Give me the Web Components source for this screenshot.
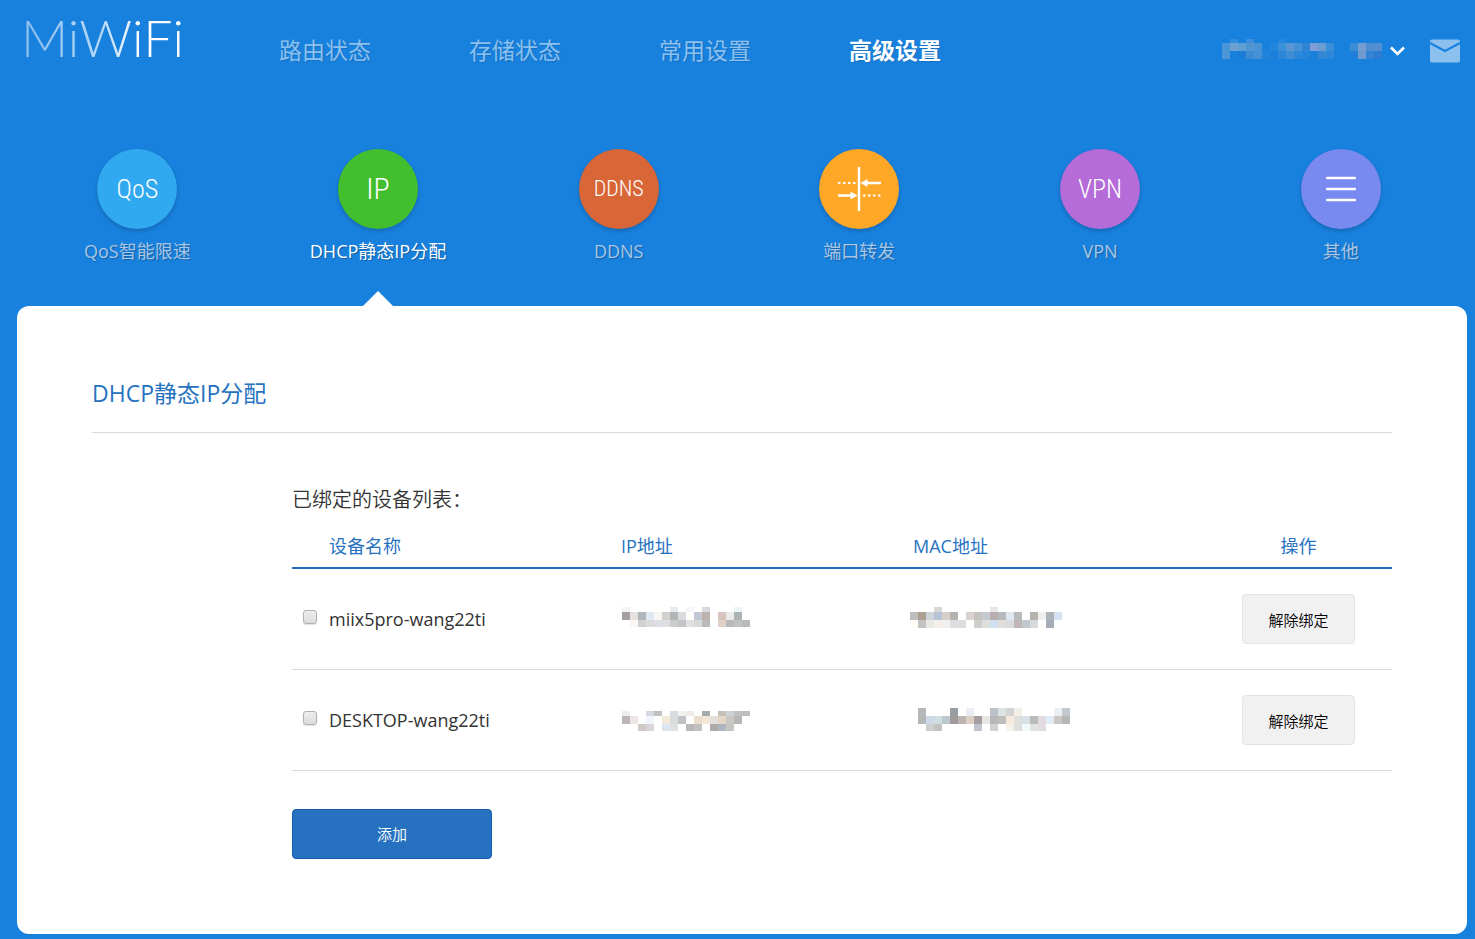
<!DOCTYPE html>
<html lang="zh-CN">
<head>
<meta charset="utf-8">
<title>MiWiFi</title>
<style>
  body {
    margin: 0;
    min-height: 100vh;
    background: #1881de;
    color: #333;
    font-family: "Open Sans", "Noto Sans CJK SC", sans-serif;
    font-weight: 400;
  }
</style>
</head>
<body>
<router-app></router-app>

<template id="t-app">
  <style>
    :host { display: block; padding: 0 8px 5px 17px; }
  </style>
  <app-header></app-header>
  <tab-bar>
    <tab-item hue="#30a9f0" label="QoS智能限速"><icon-text size="26">QoS</icon-text></tab-item>
    <tab-item hue="#42be2e" label="DHCP静态IP分配" active><icon-text size="30">IP</icon-text></tab-item>
    <tab-item hue="#d86636" label="DDNS"><icon-text size="22">DDNS</icon-text></tab-item>
    <tab-item hue="#ffa726" label="端口转发"><forward-icon></forward-icon></tab-item>
    <tab-item hue="#b56cd8" label="VPN"><icon-text size="26">VPN</icon-text></tab-item>
    <tab-item hue="#7889ef" label="其他"><lines-icon></lines-icon></tab-item>
  </tab-bar>
  <settings-panel heading="DHCP静态IP分配">
    <device-table></device-table>
    <action-button kind="primary">添加</action-button>
  </settings-panel>
</template>

<template id="t-header">
  <style>
    :host { display: flex; align-items: center; height: 100px; }
    .logo {
      width: 160px; margin: 0 98px 26px 4px; white-space: nowrap;
      font: 300 52px/52px Lato, sans-serif; text-decoration: none;
      color: transparent;
      background: linear-gradient(90deg, #86bdf0, #b8d9f6 50%, #fff 75%);
      -webkit-background-clip: text; background-clip: text;
    }
    nav { display: flex; gap: 98px; flex: 1; }
    nav a {
      font-size: 23px; line-height: 32px; font-weight: 400; color: #8cc0ef;
      text-decoration: none; white-space: nowrap; text-shadow: 1px 1px 1px rgba(0,0,0,.12);
    }
    nav a[aria-current] { color: #fff; font-weight: 700; }
    button { display: flex; align-items: center; margin-top: 2px; padding: 0; border: 0; background: none; }
    .user { gap: 8px; margin-right: 25px; }
    .mail { margin-right: 7px; }
    svg { display: block; }
  </style>
  <a class="logo" href="#">MiWiFi</a>
  <nav>
    <a href="#status">路由状态</a>
    <a href="#storage">存储状态</a>
    <a href="#common">常用设置</a>
    <a href="#advanced" aria-current="page">高级设置</a>
  </nav>
  <button class="user" aria-label="账户">
    <mosaic-strip width="160" rows="
      0,4:- #328ddd - #3b8fdb - - - #2586de - - - - - - - - - - - -|
      4,8:#4a97d8 #6ba1d5 #5f9fd3 #5296d1 #4a93d4 - #2286dd #3b90da #5b97d5 #4592d8 #3184d2 #7c9dd5 #6a9dd2 #3990d9 - - #3c8dd5 #769dd3 #508dd0 #568fd0|
      12,8:#4b95d9 #1881de #1c7dd7 #3d8bd3 #4690d6 #1f83da #1a80db #2d87d6 #3e8cd3 #2d87d9 #2484d9 #1980d9 #3488d3 #2d88d9 #1881da - #207fd9 #719bd0 #3283d5 #2c7bd0"></mosaic-strip>
    <svg width="15" height="10" viewBox="0 0 15 10"><path d="M1 1.5 7.500 8 14 1.500" fill="none" stroke="#fff" stroke-width="2.600"/></svg>
  </button>
  <button class="mail" aria-label="消息">
    <svg width="30" height="24" viewBox="0 0 30 24"><rect y=".5" width="30" height="23" rx="2" fill="#8cc0ef"/><path d="M0 4 15 12 30 4" fill="none" stroke="#1881de" stroke-width="2"/></svg>
  </button>
</template>

<template id="t-tabs">
  <style>
    :host { display: block; padding: 49px 6px 0 0; }
    nav { display: grid; grid-template-columns: repeat(6, 1fr); }
  </style>
  <nav><slot></slot></nav>
</template>

<template id="t-tab">
  <style>
    :host { display: block; position: relative; height: 157px; }
    a {
      display: flex; flex-direction: column; align-items: center; gap: 8px;
      color: #a9c6e6; text-decoration: none; white-space: nowrap;
      font-size: 18px; line-height: 28px; text-shadow: 1px 1px 1px rgba(0,0,0,.25);
    }
    :host([active]) a { color: #fff; }
    .disc {
      display: flex; align-items: center; justify-content: center;
      width: 80px; height: 80px; border-radius: 50%; color: #fff; text-shadow: none;
      background: var(--hue); box-shadow: 0 2px 4px rgba(0,0,0,.2);
    }
    .pointer { display: none; position: absolute; bottom: 0; left: 50%; margin-left: -15px; }
    :host([active]) .pointer { display: block; }
  </style>
  <a href="#"><span class="disc"><slot></slot></span><span class="label"></span></a>
  <svg class="pointer" width="30" height="15" viewBox="0 0 30 15"><path d="M0 15 15 0 30 15z" fill="#fff"/></svg>
</template>

<template id="t-icon-text">
  <style>
    :host { display: block; font-family: "Liberation Sans Narrow", "Roboto Condensed", "DejaVu Sans Condensed", sans-serif; font-weight: 300; line-height: 32px; }
  </style>
  <slot></slot>
</template>

<template id="t-forward">
  <style>:host, svg { display: block; }</style>
  <svg width="44" height="46" viewBox="0 0 44 46" fill="none" stroke="#fff">
    <path d="M22 1v44" stroke-width="2.500"/>
    <path d="M1 17h19M26 29.500h18" stroke-width="2" stroke-dasharray="2.500 2.500"/>
    <path d="M29 17h15M1 29.500h14" stroke-width="2.400"/>
    <path d="M23.500 17l7-4v8zM20.500 29.500l-7-4v8z" fill="#fff" stroke="none"/>
  </svg>
</template>

<template id="t-lines">
  <style>:host, svg { display: block; }</style>
  <svg width="30" height="26" viewBox="0 0 30 26"><path d="M1 2h28M1 13h28M1 24h28" stroke="#fff" stroke-width="2.500" stroke-linecap="round"/></svg>
</template>

<template id="t-panel">
  <style>
    :host { display: block; padding: 75px; border-radius: 12px; background: #fff; }
    h1 {
      margin: 0 0 52px; padding-bottom: 27px; border-bottom: 1px solid #d9d9d9;
      font-size: 23px; line-height: 24px; font-weight: inherit; color: #2672c0;
    }
    .body { display: flex; flex-direction: column; align-items: flex-start; gap: 38px; margin-left: 200px; }
  </style>
  <h1></h1>
  <div class="body"><slot></slot></div>
</template>

<template id="t-table">
  <style>
    :host { display: block; width: 100%; }
    table { width: 100%; table-layout: fixed; border-collapse: separate; border-spacing: 0; }
    caption { text-align: left; font-size: 20px; line-height: 30px; padding-bottom: 9px; font-weight: 350; }
    th, td { padding: 0; text-align: left; font-size: 18px; line-height: 28px; }
    th { height: 43px; font-weight: inherit; color: #2672c0; border-bottom: 2px solid #2672c0; }
    td { height: 100px; border-bottom: 1px solid #d9d9d9; }
    .pick { width: 37px; }
    .act { width: 187px; text-align: center; }
    td.pick { line-height: 0; }
    input {
      appearance: none; width: 14px; height: 14px; margin: 0 0 4px 11px;
      border: 1px solid #b0b0b0; border-radius: 3px;
      background: linear-gradient(#ededed, #dcdcdc); box-shadow: 0 1px 1px rgba(0,0,0,.12);
    }
  </style>
  <table>
    <caption>已绑定的设备列表：</caption>
    <thead>
      <tr><th class="pick"></th><th>设备名称</th><th>IP地址</th><th>MAC地址</th><th class="act">操作</th></tr>
    </thead>
    <tbody>
      <tr>
        <td class="pick"><input type="checkbox" id="d1"></td>
        <td><label for="d1">miix5pro-wang22ti</label></td>
        <td><mosaic-strip width="136" shift="1" rows="
          0,5:#f4f3f3 - - - - - #e8ebee - #f3f6fb - #d8d9df - - - #eaf3f6 -|
          5,8:#a39fa3 #e6e1df #b0b7ba #e0e8f1 #f8f5f3 #d1d1ce #b3b5b5 #d9dbde #fffefb #c1c7d4 #bfb1ac - #d5c5bc #eaeae9 #adb3b4 -|
          13,7:- #faf6f3 #cfd1d3 #d8dadc #dedee6 #dfdfe1 #cbccce #c3c4c5 #e0e0e3 #d9dadc #bababb - #e0d0c6 #bababc #c0c1c1 #b9b9ba"></mosaic-strip></td>
        <td><mosaic-strip width="160" shift="-3" rows="
          0,5:- - - #d8d9d5 - - - - - - #e7e7e7 - - - - - - - -|
          5,8:#bebebe #ad9f92 #d0d4da #b7c3d6 #d8cfc8 #b4b1ae - #d8d3d0 #c5c4c0 #c4cad2 #b9adb0 #b7b9ba #dfe8f2 #b9babb - #b5b2ac #eeeeef #acb4b9 #d4e2ef|
          13,8:#fffdf5 #c3c4c2 #eae9e6 #f4efeb #f0f0f0 #dedee0 #dddde0 - #d1cfcc #dededc #cfdfed #e1dedb #dadbdd #c0b6b8 #c1c9d0 #d8d9dc - #a6adb8 -"></mosaic-strip></td>
        <td class="act"><action-button>解除绑定</action-button></td>
      </tr>
      <tr>
        <td class="pick"><input type="checkbox" id="d2"></td>
        <td><label for="d2">DESKTOP-wang22ti</label></td>
        <td><mosaic-strip width="136" shift="1" rows="
          3,5:#efedea - - #d7d8df #c1c1c2 - #dadbe0 #f4f2ef #eeebe7 - #a6abad - #c7c0b4 #cdd2d5 #bfc1c2 #bcbdbf|
          8,8:#bbb5b9 #ede6e5 #fbfdff #f1f4fa - #f4eadc #d9dcdc #bfc1c2 - #ebddce #f3e6d5 #e3dfda #e5d7c7 #c9c6c3 #b5b7b8 -|
          16,7:- - #cfcac5 #d7d4db - #dae7f2 #dfe0e2 - #b8b8b8 #c3c0c1 - #b0aaaa #aeb7c1 #c5c6c1 - -"></mosaic-strip></td>
        <td><mosaic-strip width="160" shift="5" rows="
          0,8:#b5b9bc - - - #989ca3 - #eaeef2 - - #bac3cc #dde2e3 #d3d4d1 #f2eee8 - - - - #edf0f2 #c4c9d1|
          8,8:#b5b6b6 #cdd8e9 #d0dee1 #bec9cf #a09a9a #bdb3b3 #decfc5 #a49ea0 #e6e6e3 #b8b6b9 #bebfbd #f7e9dc #dfe0db #d7e2e8 #babdb7 #e1dbe0 #e0ecf8 #cbc7c4 #b5b8b9|
          16,7:- #cecfd1 #c1c2c0 - - - - #c1c4cf - #d1d1cf - #f6f1eb #dfdfdf #f1fbfc #e2e3e3 #e2dbe0 - - -"></mosaic-strip></td>
        <td class="act"><action-button>解除绑定</action-button></td>
      </tr>
    </tbody>
  </table>
</template>

<template id="t-button">
  <style>
    :host { display: inline-block; vertical-align: middle; }
    button {
      display: block; box-sizing: border-box; width: 113px; height: 50px; padding: 0;
      border: 1px solid #e3e3e3; border-radius: 4px; background: #f1f1f1; color: #000;
      font-family: inherit; font-size: 15px; font-weight: 350;
    }
    :host([kind="primary"]) button { width: 200px; padding-bottom: 2px; background: #2672c0; border-color: #125ca8; color: #fff; }
  </style>
  <button type="button"><slot></slot></button>
</template>

<script>
  const stamp = (host, id) => {
    const root = host.attachShadow({ mode: "open" });
    root.append(document.getElementById(id).content.cloneNode(true));
    return root;
  };
  const plain = (name, id) => customElements.define(name, class extends HTMLElement {
    constructor() { super(); stamp(this, id); }
  });

  // Pixelated block that hides private text: rows of "y,height:colour colour …", 8px per cell.
  customElements.define("mosaic-strip", class extends HTMLElement {
    connectedCallback() {
      if (this.shadowRoot) return;
      const shift = Number(this.getAttribute("shift") || 0);
      let rects = "";
      for (const row of this.getAttribute("rows").trim().split("|")) {
        const [pos, cells] = row.trim().split(":");
        const [y, h] = pos.split(",");
        cells.trim().split(/\s+/).forEach((c, i) => {
          if (c !== "-") rects += `<rect x="${shift + i * 8}" y="${y}" width="8" height="${h}" fill="${c}"/>`;
        });
      }
      this.attachShadow({ mode: "open" }).innerHTML =
        `<style>:host, svg { display: block; } svg { overflow: visible; }</style>
         <svg width="${this.getAttribute("width")}" height="24" shape-rendering="crispEdges" aria-hidden="true">${rects}</svg>`;
    }
  });
  customElements.define("icon-text", class extends HTMLElement {
    constructor() { super(); stamp(this, "t-icon-text"); }
    connectedCallback() { this.style.fontSize = this.getAttribute("size") + "px"; }
  });
  customElements.define("tab-item", class extends HTMLElement {
    constructor() { super(); stamp(this, "t-tab"); }
    connectedCallback() {
      this.style.setProperty("--hue", this.getAttribute("hue"));
      this.shadowRoot.querySelector(".label").textContent = this.getAttribute("label");
    }
  });
  customElements.define("settings-panel", class extends HTMLElement {
    constructor() { super(); stamp(this, "t-panel"); }
    connectedCallback() { this.shadowRoot.querySelector("h1").textContent = this.getAttribute("heading"); }
  });
  plain("forward-icon", "t-forward");
  plain("lines-icon", "t-lines");
  plain("action-button", "t-button");
  plain("device-table", "t-table");
  plain("tab-bar", "t-tabs");
  plain("app-header", "t-header");
  plain("router-app", "t-app");
</script>
</body>
</html>
